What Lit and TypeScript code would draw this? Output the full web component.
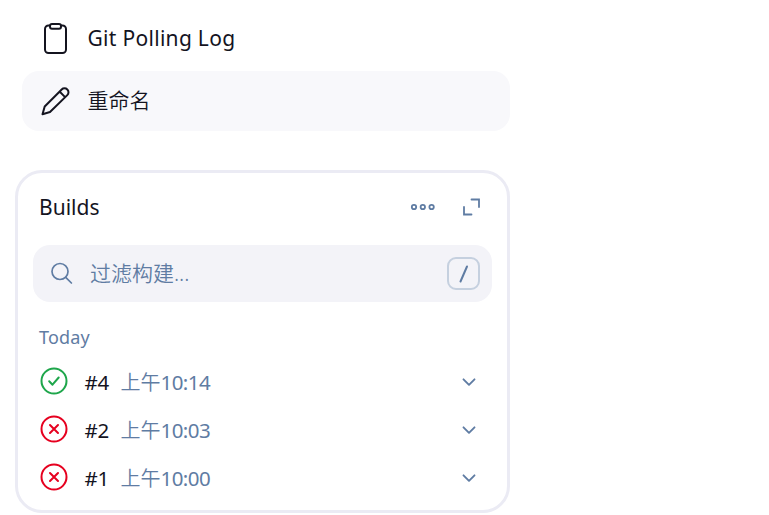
import { LitElement, html, css, svg } from "lit";
import { customElement, property } from "lit/decorators.js";

const builds = [
  { id: "#4", time: "10:14", ok: true },
  { id: "#2", time: "10:03", ok: false },
  { id: "#1", time: "10:00", ok: false },
];

@customElement("build-row")
class BuildRow extends LitElement {
  @property({ attribute: false }) build = builds[0];

  static styles = css`
    :host { display: flex; align-items: center; height: 48px; padding: 0 30px 0 22px; }
    svg { display: block; flex: none; fill: none; stroke-linecap: round; stroke-linejoin: round; }
    .ok { stroke: #1ea64b; }
    .bad { stroke: #e6001f; }
    .id { padding-top: 1px; margin-left: 16.5px; width: 36px; color: #14141f; letter-spacing: -0.3px; }
    .time { padding-top: 2px; flex: 1; color: #5f7ca3; display: flex; letter-spacing: -0.55px; }
    .zh { font-size: 20px; font-weight: 350; letter-spacing: 0; padding-top: 1px; }
    .chev { stroke: #5f7ca3; stroke-width: 1.9; }
  `;

  render() {
    const b = this.build;
    return html`
      <svg class=${b.ok ? "ok" : "bad"} width="28" height="28" viewBox="0 0 28 28" stroke-width="2">
        <circle cx="14" cy="14" r="12.5" />
        ${b.ok
          ? svg`<path d="M9.2 14.3l3.3 3.4 6.2-7.2" />`
          : svg`<path d="M10 10l8 8M18 10l-8 8" />`}
      </svg>
      <span class="id">${b.id}</span>
      <span class="time"><span class="zh">上午</span>${b.time}</span>
      <svg class="chev" width="16" height="16" viewBox="0 0 16 16"><path d="M2.5 6.3l5.5 5.5L13.5 6.3" /></svg>
    `;
  }
}

@customElement("app-root")
class AppRoot extends LitElement {
  static styles = css`
    :host {
      display: block; box-sizing: border-box; width: 769px; height: 515px; overflow: hidden;
      background: #fff; color: #14141f; padding: 8px 0 0 15px;
      font: 20.5px/28px "Noto Sans", "Noto Sans CJK SC", sans-serif;
    }
    svg { display: block; flex: none; fill: none; stroke: currentColor; stroke-width: 2; stroke-linecap: round; stroke-linejoin: round; }
    .item { display: flex; align-items: center; box-sizing: border-box; width: 488px; height: 60px; margin-left: 7px; padding-left: 17px; gap: 15.5px; border-radius: 17px; }
    .active { margin-top: 3px; background: #f8f8fb; }
    .git { font-size: 21px; letter-spacing: 0.3px; }
    .zh { font-size: 21px; font-weight: 350; padding-bottom: 2px; }
    .card { box-sizing: border-box; width: 495px; height: 343px; margin-top: 39px; border: 3px solid #ebebf4; border-radius: 27px; }
    .head { display: flex; align-items: center; box-sizing: border-box; height: 72px; padding: 0 26px 4px 21px; color: #5f7ca3; }
    .title { flex: 1; color: #14141f; font-size: 21px; letter-spacing: 0; }
    .dots { margin-right: 25px; stroke-width: 1.8; }
    .sharp { stroke-linejoin: miter; stroke-width: 1.8; }
    .lens { stroke-width: 1.7; }
    .search { display: flex; align-items: center; box-sizing: border-box; height: 57px; margin: 0 15px; padding: 0 12px 0 17px; border-radius: 17px; background: #f3f3f8; color: #5f7ca3; }
    .hint { flex: 1; margin-left: 16px; }
    .key { display: flex; align-items: center; justify-content: center; box-sizing: border-box; width: 33px; height: 33px; border: 2px solid #c5d0df; border-radius: 9px; }
    .today { height: 28px; margin-top: 21px; padding: 0 21px; font-size: 18px; letter-spacing: 0.2px; color: #5f7ca3; }
    .list { margin-top: 6px; }
  `;

  render() {
    return html`
      <div class="item">
        <svg width="33" height="34" viewBox="39 21 33 34">
          <path d="M50 25.5h-1.5a3.5 3.5 0 0 0-3.5 3.5v20.5a3.5 3.5 0 0 0 3.5 3.5h14a3.5 3.5 0 0 0 3.5-3.5V29a3.5 3.5 0 0 0-3.5-3.5H61" />
          <rect x="50" y="24" width="11" height="4.7" rx="2" />
        </svg>
        <span class="git">Git Polling Log</span>
      </div>
      <div class="item active">
        <svg width="33" height="34" viewBox="39 84 33 34">
          <path d="M42.5 114.2l2.2-7.7L61.7 89.5a3.9 3.9 0 0 1 5.600 0a3.9 3.9 0 0 1 0 5.600L50 112zM59.800 91.800l5.300 5.300" />
        </svg>
        <span class="zh">重命名</span>
      </div>
      <div class="card">
        <div class="head">
          <span class="title">Builds</span>
          <svg class="dots" width="26" height="8" viewBox="0 0 26 8">
            <circle cx="4" cy="4" r="2.2" /><circle cx="12.8" cy="4" r="2.2" /><circle cx="21.6" cy="4" r="2.2" />
          </svg>
          <svg class="sharp" width="20" height="20" viewBox="0 0 20 20"><path d="M10.5 2.5H18v7.500M3 10v7.500H10.500" /></svg>
        </div>
        <div class="search">
          <svg class="lens" width="24" height="24" viewBox="0 0 24 24"><circle cx="10" cy="9.5" r="8" /><path d="M15.7 15.3l5.7 5.7" /></svg>
          <span class="hint zh">过滤构建...</span>
          <span class="key"><svg width="12" height="20" viewBox="0 0 12 20"><path d="M2.5 17.500L9 2.5" /></svg></span>
        </div>
        <div class="today">Today</div>
        <div class="list">${builds.map((b) => html`<build-row .build=${b}></build-row>`)}</div>
      </div>
    `;
  }
}
